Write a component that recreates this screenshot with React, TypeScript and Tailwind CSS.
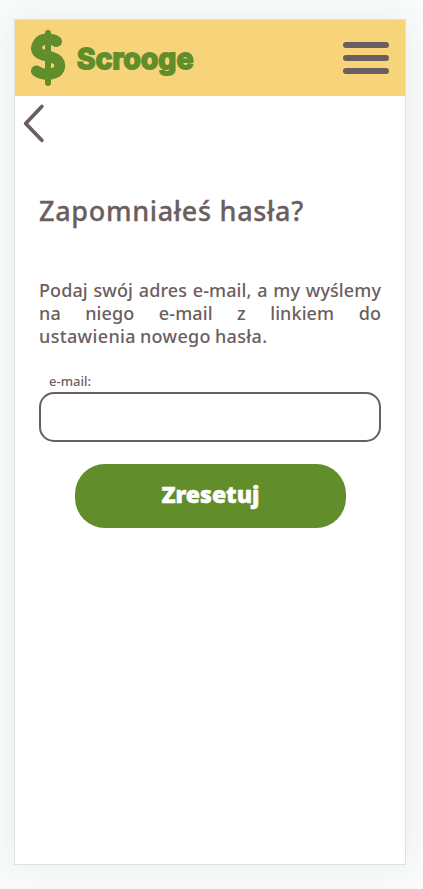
import React from "react";

function DollarLogo() {
  return (
    <svg width="36" height="58" viewBox="0 0 36 58" fill="none" stroke="#628d2b" strokeLinecap="round" strokeLinejoin="round" aria-hidden="true">
      <path d="M18 4V54" strokeWidth="6" />
      <path d="M26.5 12.5C21 9 12 9.3 8.8 13.5C5 18.5 6 23.3 11.5 25.3C17 27.5 24.5 28 27.8 31.5C31.5 36 29.5 42 24.5 44C18 46.2 11 45.2 6.5 42" strokeWidth="11" />
    </svg>
  );
}

function Header() {
  return (
    <header className="flex h-[76px] items-center justify-between bg-[#f7d479] pl-[15px] pr-4">
      <div className="flex items-center">
        <DollarLogo />
        <span className="ml-[11px] pt-0.5 font-['Inter',sans-serif] text-[28px] leading-10 font-bold tracking-[0.35px] text-[#628d2b] [-webkit-text-stroke:2px_#628d2b] [stroke-linejoin:round]">
          Scrooge
        </span>
      </div>
      <button aria-label="Menu" className="flex w-[46px] flex-col gap-[7px]">
        <span className="h-[6px] rounded-full bg-[#6b5e5e]" />
        <span className="h-[6px] rounded-full bg-[#6b5e5e]" />
        <span className="h-[6px] rounded-full bg-[#6b5e5e]" />
      </button>
    </header>
  );
}

export default function App() {
  return (
    <div className="h-[889px] w-full overflow-hidden bg-[#f9fbfa] pt-[19px] pl-[14px] font-['Noto_Sans',sans-serif] text-[#6b5e5e]">
      <main className="h-[846px] w-[392px] border border-[#e0e2e2] bg-white shadow-[0_0_30px_rgba(0,0,0,0.06)]">
        <Header />
        <button aria-label="Wstecz" className="ml-[8px] mt-[7px] block h-[42px] w-[23px]">
          <svg width="23" height="42" viewBox="0 0 23 42" fill="none" stroke="#6b5e5e" strokeWidth="3.8" strokeLinecap="round" strokeLinejoin="round">
            <path d="M18.8 3.5L2.7 20.5L18.8 37.3" />
          </svg>
        </button>
        <section className="px-6 pt-[46px]">
          <h1 className="h-10 whitespace-nowrap text-[27px] leading-10 font-medium tracking-[0.68px] [-webkit-text-stroke:0.3px_#6b5e5e]">Zapomniałeś hasła?</h1>
          <p className="mt-[48px] text-[18px] leading-[23px] font-medium tracking-[0.1px] [word-spacing:-1px]">
            <span className="block whitespace-nowrap [text-align-last:justify]">Podaj swój adres e-mail, a my wyślemy</span>
            <span className="block whitespace-nowrap [text-align-last:justify]">na niego e-mail z linkiem do</span>
            <span className="block whitespace-nowrap tracking-[0.35px]">ustawienia nowego hasła.</span>
          </p>
          <form className="mt-[23px]">
            <label htmlFor="email" className="ml-[10px] block h-[21px] text-[13px] leading-5 font-medium">e-mail:</label>
            <input id="email" type="email" className="block h-[50px] w-full rounded-[15px] border-2 border-[#6b5e5e] bg-white px-3 outline-none" />
            <button type="button" className="ml-9 mt-[22px] block h-16 w-[271px] rounded-[30px] bg-[#628d2b] pb-1 text-[23px] leading-8 font-black text-white [-webkit-text-stroke:0.5px_#ffffff]">
              Zresetuj
            </button>
          </form>
        </section>
      </main>
    </div>
  );
}
